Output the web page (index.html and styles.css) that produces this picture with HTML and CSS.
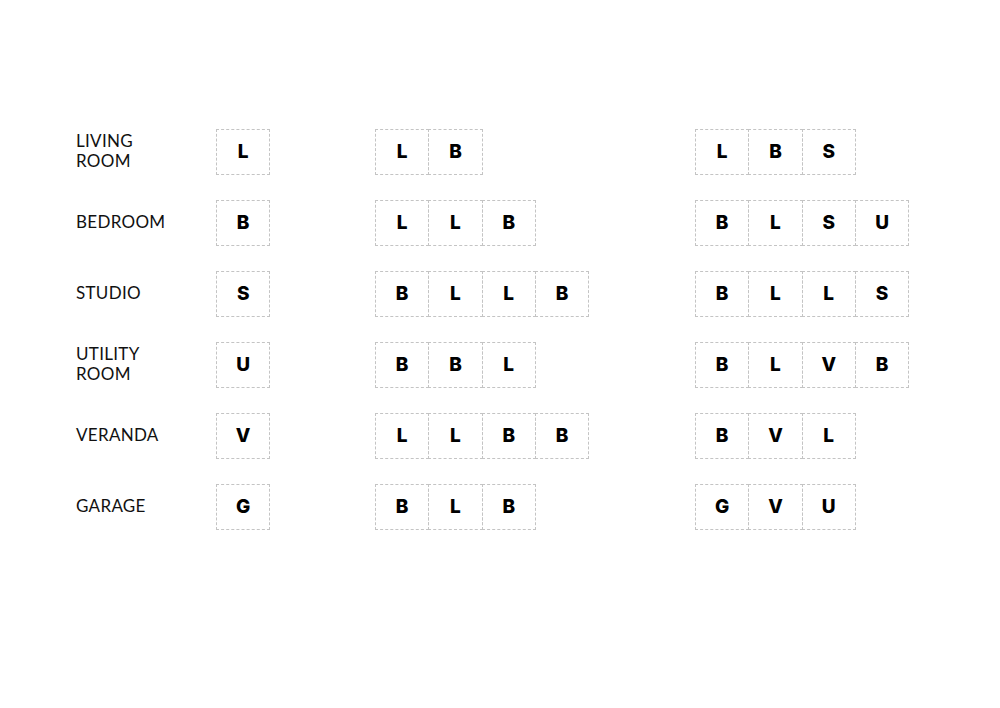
FILE: index.html
```html
<!DOCTYPE html>
<html>
<head>
<meta charset="utf-8">
<link rel="stylesheet" href="styles.css">
</head>
<body>
<div class="sheet">
  <div class="row">
    <div class="label">LIVING<br>ROOM</div>
    <div class="c1"><div class="cells"><span>L</span></div></div>
    <div class="c2"><div class="cells"><span>L</span><span>B</span></div></div>
    <div class="c3"><div class="cells"><span>L</span><span>B</span><span>S</span></div></div>
  </div>
  <div class="row">
    <div class="label">BEDROOM</div>
    <div class="c1"><div class="cells"><span>B</span></div></div>
    <div class="c2"><div class="cells"><span>L</span><span>L</span><span>B</span></div></div>
    <div class="c3"><div class="cells"><span>B</span><span>L</span><span>S</span><span>U</span></div></div>
  </div>
  <div class="row">
    <div class="label">STUDIO</div>
    <div class="c1"><div class="cells"><span>S</span></div></div>
    <div class="c2"><div class="cells"><span>B</span><span>L</span><span>L</span><span>B</span></div></div>
    <div class="c3"><div class="cells"><span>B</span><span>L</span><span>L</span><span>S</span></div></div>
  </div>
  <div class="row">
    <div class="label">UTILITY<br>ROOM</div>
    <div class="c1"><div class="cells"><span>U</span></div></div>
    <div class="c2"><div class="cells"><span>B</span><span>B</span><span>L</span></div></div>
    <div class="c3"><div class="cells"><span>B</span><span>L</span><span>V</span><span>B</span></div></div>
  </div>
  <div class="row">
    <div class="label">VERANDA</div>
    <div class="c1"><div class="cells"><span>V</span></div></div>
    <div class="c2"><div class="cells"><span>L</span><span>L</span><span>B</span><span>B</span></div></div>
    <div class="c3"><div class="cells"><span>B</span><span>V</span><span>L</span></div></div>
  </div>
  <div class="row">
    <div class="label">GARAGE</div>
    <div class="c1"><div class="cells"><span>G</span></div></div>
    <div class="c2"><div class="cells"><span>B</span><span>L</span><span>B</span></div></div>
    <div class="c3"><div class="cells"><span>G</span><span>V</span><span>U</span></div></div>
  </div>
</div>
</body>
</html>
```

FILE: styles.css
```css
html, body {
  margin: 0;
  padding: 0;
  background: #ffffff;
}

.sheet {
  width: 1000px;
  height: 708px;
  box-sizing: border-box;
  padding: 129px 0 0 76px;
  display: flex;
  flex-direction: column;
  gap: 25px;
}

.row {
  display: grid;
  grid-template-columns: 140px 159px 320px 1fr;
  align-items: center;
  height: 46px;
}

.label {
  font-family: "Lato", "Liberation Sans", sans-serif;
  font-size: 17px;
  line-height: 20px;
  letter-spacing: 0.3px;
  color: #111;
  margin-top: -2px;
}

.cells {
  display: flex;
}

.cells span {
  width: 52.3px;
  height: 42px;
  padding-bottom: 2px;
  border: 1px dashed #c4c4c4;
  margin-right: -1px;
  display: flex;
  align-items: center;
  justify-content: center;
  font-family: "Inter", "Liberation Sans", sans-serif;
  font-weight: 800;
  font-size: 19px;
  color: #000;
}
```
